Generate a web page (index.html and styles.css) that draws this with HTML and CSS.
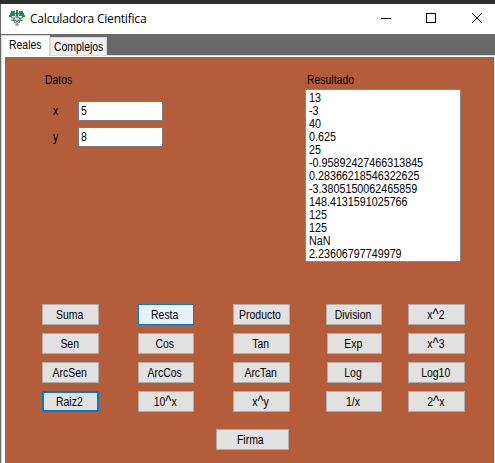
FILE: index.html
```html
<!DOCTYPE html>
<html lang="es">
<head>
<meta charset="utf-8">
<title>Calculadora Cientifica</title>
<link rel="stylesheet" href="styles.css">
</head>
<body>
<div class="backdrop"></div>
<div class="window">
  <header class="titlebar">
    <svg class="logo" width="16" height="16" viewBox="0 0 16 16" fill="none">
      <path d="M2 1h4v2H2zM7 0h2v3H7zM10 1h4v2h-4zM1 3h4v3H1zM11 3h4v3h-4zM5 4h6v2H5zM0 5h3v2H0zM13 5h3v2h-3z" fill="#159158"/>
      <path d="M2 7.5l3 1M14 7.5l-3 1M2 10l4 1M14 10l-4 1M5 12l2 1M11 12l-2 1" stroke="#397553"/>
      <path d="M3 3.5h10M5 7l1 3 2 2 2-2 1-3M8 2v13M6 7h4M4 9l2 3M12 9l-2 3M6 15h4" stroke="#484f4b" stroke-width=".8"/>
      <path d="M6 4h1v2H6zM9 4h1v2H9zM7 8h2v2H7z" fill="#c9dfd2"/>
    </svg>
    <h1 class="title">Calculadora Cientifica</h1>
    <svg class="controls" width="102" height="12" viewBox="0 0 102 12" fill="none" stroke="#000" shape-rendering="crispEdges">
      <path d="M0 6.5h10M45.5 1.5h9v9h-9z"/>
      <path d="M91 1l10 10M101 1L91 11" shape-rendering="auto"/>
    </svg>
  </header>
  <nav class="tabs">
    <div class="tab active"><span class="t">Reales</span></div>
    <div class="tab"><span class="t">Complejos</span></div>
  </nav>
  <main class="page">
    <div class="top">
      <section class="data">
        <div class="heading"><span class="t">Datos</span></div>
        <label class="field"><span class="name"><span class="t">x</span></span><span class="box"><span class="t">5</span></span></label>
        <label class="field"><span class="name"><span class="t">y</span></span><span class="box"><span class="t">8</span></span></label>
      </section>
      <section class="result">
        <div class="heading"><span class="t">Resultado</span></div>
        <ul class="list">
          <li><span class="t">13</span></li>
          <li><span class="t">-3</span></li>
          <li><span class="t">40</span></li>
          <li><span class="t">0.625</span></li>
          <li><span class="t">25</span></li>
          <li><span class="t">-0.95892427466313845</span></li>
          <li><span class="t">0.28366218546322625</span></li>
          <li><span class="t">-3.3805150062465859</span></li>
          <li><span class="t">148.4131591025766</span></li>
          <li><span class="t">125</span></li>
          <li><span class="t">125</span></li>
          <li><span class="t">NaN</span></li>
          <li><span class="t">2.23606797749979</span></li>
        </ul>
      </section>
    </div>
    <div class="keys">
      <button><span class="t">Suma</span></button>
      <button class="hover"><span class="t">Resta</span></button>
      <button><span class="t">Producto</span></button>
      <button><span class="t">Division</span></button>
      <button><span class="t">x<span class="caret">^</span>2</span></button>
      <button><span class="t">Sen</span></button>
      <button><span class="t">Cos</span></button>
      <button><span class="t">Tan</span></button>
      <button class="narrow"><span class="t">Exp</span></button>
      <button><span class="t">x<span class="caret">^</span>3</span></button>
      <button><span class="t">ArcSen</span></button>
      <button><span class="t">ArcCos</span></button>
      <button><span class="t">ArcTan</span></button>
      <button class="narrow"><span class="t">Log</span></button>
      <button><span class="t">Log10</span></button>
      <button class="focus"><span class="t">Raiz2</span></button>
      <button><span class="t">10<span class="caret">^</span>x</span></button>
      <button><span class="t">x<span class="caret">^</span>y</span></button>
      <button><span class="t">1/x</span></button>
      <button><span class="t">2<span class="caret">^</span>x</span></button>
    </div>
    <button class="sign"><span class="t">Firma</span></button>
  </main>
</div>
</body>
</html>
```

FILE: styles.css
```css
* { box-sizing: border-box; }

body {
  margin: 0;
  width: 495px;
  height: 463px;
  overflow: hidden;
  background: #696969;
  color: #000;
  font: 12px/13px "Liberation Sans", Arial, sans-serif;
}

.backdrop { height: 4px; background: #2c2c2d; }

.window {
  margin-left: 1px;
  height: 459px;
  display: flex;
  flex-direction: column;
  background: #696969;
}

.t {
  display: inline-block;
  transform: scaleX(.87);
  transform-origin: left;
  white-space: nowrap;
}

.titlebar {
  height: 30px;
  flex: none;
  display: flex;
  align-items: center;
  padding: 0 12px 0 8px;
  background: #fff;
}

.logo { margin-top: -2px; }

.title {
  flex: 1;
  margin: 0 0 0 5px;
  font: 12px/16px "Open Sans", "Noto Sans", sans-serif;
  letter-spacing: -.2px;
  white-space: nowrap;
}

.controls { margin-top: -2px; }

.tabs {
  height: 21px;
  flex: none;
  display: flex;
  align-items: flex-end;
}

.tab {
  height: 18px;
  width: 57px;
  padding: 3px 0 0 3px;
  background: #f0f0f0;
  border: 1px solid #d9d9d9;
  border-bottom: 0;
}

.tab.active {
  position: relative;
  z-index: 1;
  height: 21px;
  width: 49px;
  margin-bottom: -1px;
  padding: 3px 0 0 7px;
  background: #fff;
}

.page {
  flex: 1;
  margin: 1px 1px 0;
  border: solid #fff;
  border-width: 1px 0 0 3px;
  box-shadow: 0 0 0 1px #dcdcdc;
  background: #b45d3b;
}

.top {
  display: flex;
  justify-content: space-between;
  height: 247px;
  padding: 17px 33px 0 40px;
}

.heading { height: 15px; }

.data .heading { height: 27px; }

.result .heading { padding-left: 2px; }

.field {
  display: flex;
  align-items: center;
  height: 20px;
  margin-bottom: 6px;
}

.name { width: 33px; padding-left: 8px; }

.box {
  width: 85px;
  height: 20px;
  padding: 3px 0 0 2px;
  background: #fff;
  border: 1px solid #7a7a7a;
}

.list {
  width: 156px;
  height: 173px;
  margin: 0;
  padding: 2px 0 0 3px;
  list-style: none;
  background: #fff;
  border: 1px solid #828790;
}

.list li { height: 13px; }

.list .t { transform: scaleX(.895); }

.keys {
  display: grid;
  grid-template-columns: 57px 56px 57px 56px 57px;
  grid-auto-rows: 21px;
  column-gap: 39px;
  row-gap: 8px;
  padding-left: 37px;
}

.keys button:nth-child(5n+4) { margin-left: -3px; margin-right: 3px; }
.keys button:nth-child(5n+5) { margin-left: -16px; margin-right: 16px; }
.keys button.narrow { margin-left: -2px; }

button {
  padding: 2px 2px 0 0;
  background: #e1e1e1;
  border: 1px solid #adadad;
  border-radius: 0;
  color: #000;
  font: inherit;
  text-align: center;
}

button .t { transform-origin: center; }

.caret { font-size: 15px; line-height: 0; }

.hover { background: #e5f1fb; border-color: #0078d7; }
.focus { border: 2px solid #0078d7; }

.sign {
  display: block;
  width: 73px;
  height: 21px;
  margin: 17px 0 0 211px;
  padding-right: 4px;
}
```
